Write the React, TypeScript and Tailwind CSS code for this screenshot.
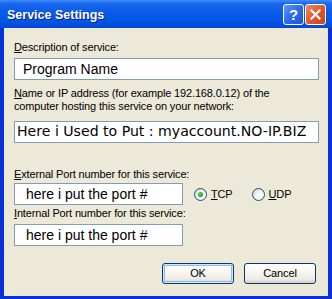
import React from "react";

const label =
  "font-['Liberation_Sans',Arial,sans-serif] text-[11px] leading-[13px] tracking-[-0.15px] text-black";
const box =
  "h-[22px] flex items-center border border-[#7f9db9] bg-white text-black whitespace-nowrap overflow-hidden";
const field = `${box} font-['Liberation_Sans',Arial,sans-serif] text-[14px]`;
const wideField = `${box} font-['DejaVu_Sans',Verdana,sans-serif] text-[14.1px]`;

const Radio = ({ checked, text }: { checked?: boolean; text: string }) => (
  <div className="flex items-center gap-[4px]">
    <span className="w-[13px] h-[13px] rounded-full border border-[#1c5180] bg-[radial-gradient(circle_at_65%_65%,#ffffff_0%,#f3f2ee_40%,#cfcdc4_100%)] flex items-center justify-center">
      {checked && (
        <span className="w-[5px] h-[5px] rounded-full bg-[radial-gradient(circle_at_40%_40%,#5ed95e_0%,#21a121_60%,#1b8b1b_100%)]" />
      )}
    </span>
    <span className={label}>
      <span className="underline">{text[0]}</span>
      {text.slice(1)}
    </span>
  </div>
);

const Button = ({ text, primary }: { text: string; primary?: boolean }) => (
  <button
    type="button"
    className={`w-[72px] h-[21px] rounded-[3px] border border-[#003c74] bg-[linear-gradient(to_bottom,#ffffff_0%,#f5f4ef_50%,#ecebe4_80%,#d6d0c5_100%)] ${label} flex items-center justify-center ${
      primary ? "shadow-[inset_0_0_0_1px_#cee7ff,inset_0_0_0_2px_#98b8ea]" : ""
    }`}
  >
    {text}
  </button>
);

export default function App() {
  return (
    <div className="w-[332px] h-[299px] flex flex-col bg-[#0831d9]">
      {/* title bar */}
      <div className="h-[28px] shrink-0 flex items-center justify-between pl-[7px] pr-[6px] bg-[linear-gradient(to_bottom,#3d8ff9_0%,#1b68ee_12%,#0a5be8_40%,#0656e5_75%,#0447d4_100%)]">
        <span className="font-['Liberation_Sans',Arial,sans-serif] font-bold text-[12.5px] text-white [text-shadow:1px_1px_0_#0a1e8c] pt-[2px]">
          Service Settings
        </span>
        <div className="flex gap-[1px]">
          <div className="w-[21px] h-[21px] rounded-[3px] border border-white bg-[linear-gradient(135deg,#5c98f8_0%,#2d6bea_50%,#1c55d6_100%)] flex items-center justify-center font-['Liberation_Sans',Arial,sans-serif] font-bold text-[15px] text-white leading-none">
            ?
          </div>
          <div className="w-[21px] h-[21px] rounded-[3px] border border-white bg-[linear-gradient(135deg,#f08a66_0%,#e2582d_50%,#c9431c_100%)] flex items-center justify-center">
            <svg width="11" height="11" viewBox="0 0 11 11">
              <path d="M1.5 1.5 L9.5 9.5 M9.5 1.5 L1.5 9.5" stroke="#fff" strokeWidth="2.2" strokeLinecap="square" />
            </svg>
          </div>
        </div>
      </div>

      {/* client */}
      <div className="flex-1 mx-[4px] mb-[3px] bg-[#ece9d8] pl-[10px] pr-[9px] pt-[13px] flex flex-col">
        <div className={label}>
          <span className="underline">D</span>escription of service:
        </div>
        <div className={`${field} mt-[4px] pl-[8px]`}>Program Name</div>

        <div className={`${label} mt-[7px]`}>
          <span className="underline">N</span>ame or IP address (for example 192.168.0.12) of the
          <br />
          computer hosting this service on your network:
        </div>
        <div className={`${wideField} mt-[8px] pl-[2px]`}>Here i Used to Put : myaccount.NO-IP.BIZ</div>

        <div className={`${label} mt-[25px]`}>
          <span className="underline">E</span>xternal Port number for this service:
        </div>
        <div className="flex items-center mt-[2px]">
          <div className={`${field} w-[169px] pl-[11px]`}>here i put the port #</div>
          <div className="ml-[11px]">
            <Radio checked text="TCP" />
          </div>
          <div className="ml-[19px]">
            <Radio text="UDP" />
          </div>
        </div>
        <div className={`${label} mt-[2px]`}>
          <span className="underline">I</span>nternal Port number for this service:
        </div>
        <div className={`${field} w-[169px] pl-[11px] mt-[4px]`}>here i put the port #</div>

        <div className="flex justify-end gap-[10px] mt-[17px] pr-[3px]">
          <Button text="OK" primary />
          <Button text="Cancel" />
        </div>
      </div>
    </div>
  );
}
